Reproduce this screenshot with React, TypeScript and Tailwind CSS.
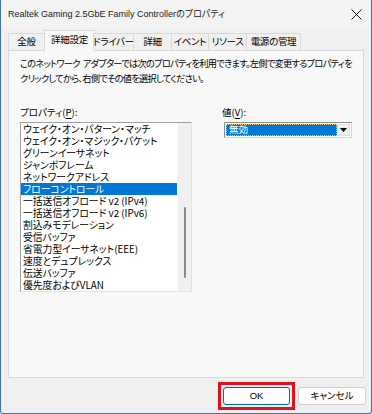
import React from "react";

const items = [
  "ウェイク・オン・パターン・マッチ",
  "ウェイク・オン・マジック・パケット",
  "グリーンイーサネット",
  "ジャンボフレーム",
  "ネットワークアドレス",
  "フローコントロール",
  "一括送信オフロード v2 (IPv4)",
  "一括送信オフロード v2 (IPv6)",
  "割込みモデレーション",
  "受信バッファ",
  "省電力型イーサネット(EEE)",
  "速度とデュプレックス",
  "伝送バッファ",
  "優先度およびVLAN",
];

const tabs = [
  { label: "全般", w: "w-[37px]" },
  { label: "詳細設定", w: "w-[51px]", active: true },
  { label: "ドライバー", w: "w-[41px]" },
  { label: "詳細", w: "w-[39px]" },
  { label: "イベント", w: "w-[38px]" },
  { label: "リソース", w: "w-[39px]" },
  { label: "電源の管理", w: "w-[55px]" },
];

export default function App() {
  return (
    <div className="w-[372px] h-[414px] bg-[#f0f0f0] border-x border-b border-[#3f72b0] rounded-b-[3px] flex flex-col text-black [font-family:'Noto_Sans_CJK_JP',sans-serif] [font-feature-settings:'palt'] overflow-hidden">
      {/* Title bar */}
      <div className="h-[28px] shrink-0 flex items-center justify-between pl-[7px] pr-[8px] bg-[#f3f3f3]">
        <span className="text-[9px] leading-none whitespace-nowrap [font-family:'Liberation_Sans','Noto_Sans_CJK_JP',sans-serif] text-[#1a1a1a]">
          Realtek Gaming 2.5GbE Family Controllerのプロパティ
        </span>
        <svg width="11" height="11" viewBox="0 0 11 11" className="mr-[1px]">
          <path d="M0.5 0.5 L10.5 10.5 M10.5 0.5 L0.5 10.5" stroke="#1a1a1a" strokeWidth="1" />
        </svg>
      </div>

      {/* Tabs */}
      <div className="flex items-end h-[22px] pl-[7px] shrink-0 relative z-10">
        {tabs.map((t) =>
          t.active ? (
            <div
              key={t.label}
              className={`${t.w} h-[21px] -mb-px -mx-[1px] bg-[#f8f8f8] border border-b-0 border-[#d9d9d9] flex items-center justify-center text-[9.5px] tracking-[-0.3px] leading-none whitespace-nowrap pb-[2px]`}
            >
              {t.label}
            </div>
          ) : (
            <div
              key={t.label}
              className={`${t.w} h-[17px] bg-[#f0f0f0] border border-b-0 border-[#d9d9d9] -ml-px first:ml-0 flex items-center justify-center text-[9.5px] tracking-[-0.3px] leading-none whitespace-nowrap`}
            >
              {t.label}
            </div>
          )
        )}
      </div>

      {/* Panel */}
      <div className="mx-[7px] h-[328px] shrink-0 bg-[#f8f8f8] border border-[#d9d9d9] pl-[11px] pr-[11px] pt-[5px] flex flex-col">
        <div className="text-[9.2px] tracking-[-0.7px] leading-[15px] whitespace-nowrap">
          <div>
            このネットワーク<span className="ml-[3px]">アダプターでは次のプロパティを利用できます。左側で変更するプロパティを</span>
          </div>
          <div>クリックしてから、右側でその値を選択してください。</div>
        </div>

        <div className="flex mt-[19px]">
          {/* Left column */}
          <div className="w-[172px] flex flex-col">
            <div className="text-[9.5px] leading-[15px] h-[15px] whitespace-nowrap">
              プロパティ(<span className="underline underline-offset-[2px]">P</span>):
            </div>
            <div className="mt-[2px] h-[170px] bg-white border border-t-[#a0a0a0] border-l-[#a0a0a0] border-r-[#e3e3e3] border-b-[#e3e3e3] flex">
              <div className="flex-1 flex flex-col">
                {items.map((it) => (
                  <div
                    key={it}
                    className={`h-[12px] flex items-center pl-[2px] text-[9.8px] leading-[12px] whitespace-nowrap ${
                      it === "フローコントロール" ? "bg-[#0078d7] text-white" : ""
                    }`}
                  >
                    {it}
                  </div>
                ))}
              </div>
              <div className="w-[14px] bg-[#f0f0f0] border-l border-[#f6f6f6] flex flex-col">
                <div className="h-[84px]" />
                <div className="ml-[6px] w-[2px] h-[71px] rounded-full bg-[#8a8a8a]" />
              </div>
            </div>
          </div>

          {/* Right column */}
          <div className="ml-[30px] flex flex-col">
            <div className="text-[9.5px] leading-[15px] h-[15px] whitespace-nowrap">
              値(<span className="underline underline-offset-[2px]">V</span>):
            </div>
            <div className="mt-[2px] ml-[2px] w-[128px] h-[16px] bg-white border border-t-[#8c8c8c] border-l-[#8c8c8c] border-r-[#d8d8d8] border-b-[#d8d8d8] flex p-[1px]">
              <div className="flex-1 bg-[#0078d7] border border-dotted border-[#e8c08a] flex items-center pl-[2px] text-white text-[9.5px] leading-none">
                無効
              </div>
              <div className="w-[13px] bg-[#f0f0f0] border border-[#e0e0e0] flex items-center justify-center">
                <svg width="7" height="4" viewBox="0 0 7 4">
                  <path d="M0 0 L7 0 L3.5 4 Z" fill="#000" />
                </svg>
              </div>
            </div>
          </div>
        </div>
      </div>

      {/* Buttons */}
      <div className="flex justify-end items-center pr-[5px] mt-[4px]">
        <div className="border-[3px] border-[#e2101e] p-[2px]">
          <div className="w-[67px] h-[18px] bg-[#fdfdfd] border border-[#0067c0] rounded-[3px] flex items-center justify-center text-[9.5px] leading-none [font-family:'Liberation_Sans','Noto_Sans_CJK_JP',sans-serif]">
            OK
          </div>
        </div>
        <div className="ml-[3px] w-[68px] h-[18px] bg-[#fdfdfd] border border-[#d0d0d0] rounded-[3px] flex items-center justify-center text-[9.5px] leading-none">
          キャンセル
        </div>
      </div>
    </div>
  );
}
